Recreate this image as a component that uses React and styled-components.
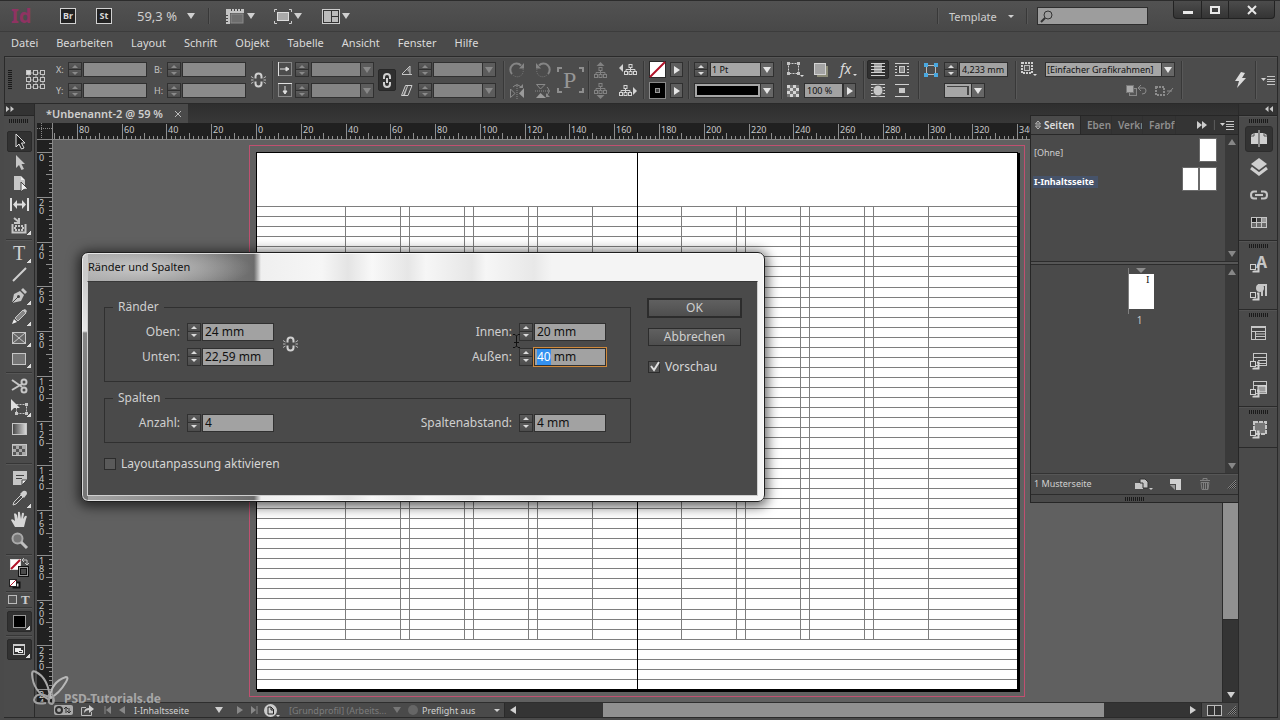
import { useEffect, useRef, useState } from "react";
import styled, { createGlobalStyle, css } from "styled-components";

const MM = 2.239;
const ORIGIN_X = 203;
const ORIGIN_Y = 12;

const GlobalStyle = createGlobalStyle`
  * { box-sizing: border-box; }
  body {
    margin: 0;
    background: #4a4a4a;
    color: #cfcfcf;
    font-family: "Noto Sans", "Open Sans", sans-serif;
    font-size: 12px;
    line-height: 16px;
  }
  button, input, select { font-family: inherit; font-size: inherit; color: inherit; }
  button { background: none; border: 0; padding: 0; }
  ::selection { background: #3390ef; color: #fff; }
`;

/* ---------- small shared parts ---------- */

const Glyph = styled.svg`
  display: block;
  flex: none;
  overflow: visible;
`;

function Icon({ w, h = w, children }) {
  return (
    <Glyph width={w} height={h} viewBox={`0 0 ${w} ${h}`} fill="none" stroke="none" aria-hidden="true">
      {children}
    </Glyph>
  );
}

const triangles = {
  down: [8, 6, "M0 0H8L4 6Z"],
  up: [8, 6, "M0 6H8L4 0Z"],
  right: [6, 8, "M0 0V8L6 4Z"],
  left: [6, 8, "M6 0V8L0 4Z"],
  smallDown: [6, 3, "M0 0H6L3 3Z"],
  spinUp: [6, 3, "M0 3H6L3 0Z"],
};

function Tri({ dir, color = "#d0d0d0" }) {
  const [w, h, d] = triangles[dir];
  return (
    <Icon w={w} h={h}>
      <path d={d} fill={color} />
    </Icon>
  );
}

const SpinBox = styled.span`
  display: flex;
  flex-direction: column;
  flex: none;
  width: 14px;
  height: ${(p) => (p.$tall ? 18 : 15)}px;
  border: 1px solid #303030;
`;

const SpinButton = styled.button`
  flex: 1;
  display: flex;
  align-items: center;
  justify-content: center;
  background: linear-gradient(#5c5c5c, #4c4c4c);
  & + & { border-top: 1px solid #303030; }
`;

function Spinner({ name, tall, dim }) {
  const color = dim ? "#8a8a8a" : "#dcdcdc";
  return (
    <SpinBox $tall={tall}>
      <SpinButton type="button" aria-label={`${name} erhöhen`}>
        <Tri dir="spinUp" color={color} />
      </SpinButton>
      <SpinButton type="button" aria-label={`${name} verringern`}>
        <Tri dir="smallDown" color={color} />
      </SpinButton>
    </SpinBox>
  );
}

const Grip = styled.span`
  display: block;
  flex: none;
  width: 20px;
  height: 4px;
  background: repeating-linear-gradient(90deg, #1a1a1a 0 1px, #4a4a4a 1px 2px);
`;

const GripTall = styled(Grip)`
  width: 4px;
  height: 20px;
  background: repeating-linear-gradient(#1a1a1a 0 1px, #4a4a4a 1px 2px);
`;

const VLine = styled.span`
  flex: none;
  align-self: stretch;
  width: 1px;
  margin: ${(p) => p.$inset || 4}px 0;
  background: #383838;
  box-shadow: 1px 0 0 #585858;
`;

/* ---------- application bar and menu ---------- */

const Window = styled.div`
  position: relative;
  display: flex;
  flex-direction: column;
  min-height: 100vh;
  min-width: 1180px;
  overflow: hidden;
  background: #4a4a4a;
`;

const AppBar = styled.header`
  display: flex;
  align-items: center;
  height: 32px;
  padding-left: 11px;
  background: linear-gradient(#525252, #484848);
  border-top: 1px solid #2c2c2c;
  border-bottom: 1px solid #3c3c3c;
`;

const Logo = styled.span`
  width: 49px;
  color: #8f3362;
  font-size: 20px;
  line-height: 20px;
  font-weight: 700;
`;

const AppBadge = styled.button`
  width: 16px;
  height: 16px;
  margin-right: 20px;
  border: 1px solid #d2d2d2;
  background: #222;
  color: #d8d8d8;
  font-size: 9px;
  line-height: 12px;
  font-weight: 700;
`;

const ZoomButton = styled.button`
  display: flex;
  align-items: center;
  justify-content: space-between;
  width: 58px;
  margin: 0 13px 0 5px;
  font-size: 13px;
`;

const ViewButton = styled.button`
  display: flex;
  align-items: center;
  gap: 2px;
  margin-left: 17px;
  width: 31px;
`;

const AppBarRight = styled.div`
  display: flex;
  align-items: center;
  align-self: stretch;
  margin-left: auto;
`;

const TemplateButton = styled.button`
  display: flex;
  align-items: center;
  justify-content: space-between;
  width: 65px;
  margin: 0 12px 0 11px;
  font-size: 11px;
`;

const SearchBox = styled.label`
  display: flex;
  align-items: center;
  width: 111px;
  height: 18px;
  margin: 0 25px 0 10px;
  padding-left: 2px;
  background: #9d9d9d;
  border: 1px solid #2e2e2e;
  input { width: 80px; border: 0; background: none; outline: 0; }
`;

const WindowButtons = styled.div`
  display: flex;
  align-self: flex-start;
  height: 18px;
  margin-right: 5px;
  border: 1px solid #222;
  border-top: 0;
  border-radius: 0 0 4px 4px;
  background: linear-gradient(#4c4c4c, #343434);
`;

const WindowButton = styled.button`
  display: flex;
  align-items: center;
  justify-content: center;
  width: ${(p) => (p.$wide ? 46 : 27)}px;
  & + & { border-left: 1px solid #222; }
`;

const MenuBar = styled.nav`
  display: flex;
  align-items: center;
  gap: 18px;
  height: 24px;
  padding: 0 0 2px 11px;
  font-size: 11px;
  a { color: #dadada; text-decoration: none; }
`;

/* ---------- control bar ---------- */

const ControlBar = styled.div`
  display: flex;
  align-items: center;
  height: 48px;
  margin: 0 2px 0 4px;
  background: #4c4c4c;
  border: 1px solid #2a2a2a;
  box-shadow: inset 0 1px 0 #575757;
  font-size: 9px;
  line-height: 12px;
`;

const Group = styled.div`
  display: grid;
  flex: none;
  grid-template-columns: ${(p) => p.$cols};
  grid-template-rows: 21px 21px;
  align-items: center;
  justify-items: start;
  padding-left: ${(p) => p.$pad || 5}px;
  label { color: #c4c4c4; }
`;

const Both = styled.span`
  grid-row: span 2;
`;

const Wide = styled.span`
  grid-column: span ${(p) => p.$n};
  display: flex;
`;

const BarInput = styled.input`
  width: ${(p) => p.$w}px;
  height: 15px;
  padding: 0 2px;
  border: 1px solid #303030;
  border-radius: 0;
  outline: 0;
  background: ${(p) => (p.$lit ? "#a2a2a2" : "#8b8b8b")};
  color: #111;
  font-size: 9px;
`;

const ComboBox = styled.span`
  position: relative;
  display: block;
  width: ${(p) => p.$w}px;
  height: 15px;
  select {
    display: block;
    width: 100%;
    height: 15px;
    padding: 0 14px 0 1px;
    appearance: none;
    border: 1px solid #303030;
    border-radius: 0;
    outline: 0;
    background: ${(p) => (p.$lit ? "#a6a6a6" : "#848484")};
    color: #111;
    font-size: 9px;
    opacity: 1;
  }
`;

const ComboArrow = styled.span`
  position: absolute;
  top: 0;
  right: 0;
  display: flex;
  align-items: center;
  justify-content: center;
  width: 14px;
  height: 15px;
  border: 1px solid #303030;
  background: ${(p) => (p.$lit ? "#666" : "#5c5c5c")};
  pointer-events: none;
`;

const ComboPreview = styled.span`
  position: absolute;
  top: 3px;
  left: 3px;
  right: 16px;
  height: 9px;
  background: ${(p) => (p.$line ? "none" : "#000")};
  ${(p) =>
    p.$line &&
    css`
      border: solid #444;
      border-width: 1px 2px 0 0;
    `}
  pointer-events: none;
`;

function Combo({ w, name, value = "", lit, preview }) {
  return (
    <ComboBox $w={w} $lit={lit}>
      <select aria-label={name} disabled={!lit} defaultValue={value}>
        <option value={value}>{value}</option>
      </select>
      {preview && <ComboPreview $line={preview === "line"} />}
      <ComboArrow $lit={lit}>
        <Tri dir="down" color={lit ? "#e6e6e6" : "#888"} />
      </ComboArrow>
    </ComboBox>
  );
}

const ArrowButton = styled.button`
  display: flex;
  align-items: center;
  justify-content: center;
  width: 13px;
  height: 15px;
  border: 1px solid #303030;
  background: #5e5e5e;
`;

const IconButton = styled.button`
  display: flex;
  align-items: center;
  justify-content: center;
  ${(p) =>
    p.$pressed &&
    css`
      width: ${p.$w}px;
      height: ${p.$h}px;
      background: #303030;
      border: 1px solid #282828;
      border-radius: 2px;
    `}
`;

const BarSpring = styled.span`
  flex: 1;
`;

const WrapInset = styled.span`
  padding-left: 4px;
`;

function BrokenLink() {
  return (
    <Icon w={15} h={16}>
      <path d="M4.5 6.500V4.500Q4.500 1.500 7.500 1.500T10.500 4.500V6.500M4.500 9.500V11.500Q4.500 14.500 7.500 14.500T10.500 11.500V9.500" stroke="#d0d0d0" strokeWidth="2" />
      <path d="M0 4.500L2.500 6M0 8H2.500M0 11.500L2.500 10M15 4.500L12.500 6M15 8H12.500M15 11.500L12.500 10" stroke="#b8b8b8" />
    </Icon>
  );
}

function ReferencePoint() {
  const spots = [0, 7, 14];
  return (
    <Icon w={20} h={20}>
      <path d="M3 3H17V17H3ZM3 10H17M10 3V17" stroke="#a8a8a8" />
      {spots.map((x) =>
        spots.map((y) => (
          <rect key={`${x}-${y}`} x={x + 0.5} y={y + 0.5} width="4" height="4" fill={x + y === 0 ? "#d8d8d8" : "#4a4a4a"} stroke="#c4c4c4" />
        ))
      )}
    </Icon>
  );
}

function BoxArrow({ down }) {
  return (
    <Icon w={15} h={15}>
      <rect x="0.500" y="0.500" width="13" height="13" stroke="#c4c4c4" strokeDasharray="1 1" />
      <path d={down ? "M0 0.500H14" : "M0.500 0V14"} stroke="#e0e0e0" />
      <path d={down ? "M7 3V10M5 8L7 11L9 8Z" : "M2 7H10M8 5L11 7L8 9Z"} stroke="#e0e0e0" fill="#e0e0e0" />
    </Icon>
  );
}

function Tree({ dir, dim }) {
  const c = dim ? "#828282" : "#d4d4d4";
  const sideways = dir === "left" || dir === "right";
  const shift = dir === "left" ? 5 : 0;
  return (
    <Icon w={sideways ? 18 : 13} h={sideways ? 11 : 16}>
      <g transform={`translate(${shift} ${dir === "up" ? 5 : 0})`}>
        <path d="M6.500 3V8M2 8V5.500H11V8" stroke={c} />
        <rect x="5" y="0.500" width="3" height="3" stroke={c} />
        <rect x="0.500" y="7.500" width="3" height="3" stroke={c} />
        <rect x="5" y="7.500" width="3" height="3" stroke={c} />
        <rect x="9.500" y="7.500" width="3" height="3" stroke={c} />
      </g>
      {dir === "up" && <path d="M2.500 4L6.500 0L10.500 4Z" fill={c} />}
      {dir === "down" && <path d="M2.500 12L6.500 16L10.500 12Z" fill={c} />}
      {dir === "left" && <path d="M4 0V8L0 4Z" fill={c} />}
      {dir === "right" && <path d="M14 2V10L18 6Z" fill={c} />}
    </Icon>
  );
}

function RotateIcon({ back }) {
  return (
    <Icon w={16}>
      <g transform={back ? "translate(16 0) scale(-1 1)" : undefined}>
        <path d="M3 12A6 6 0 0 1 12 3.500" stroke="#858585" strokeWidth="2" />
        <path d="M14 7A6 6 0 0 1 4 13" stroke="#787878" strokeDasharray="1 1" />
        <path d="M10 6.500H15V1Z" fill="#858585" />
      </g>
    </Icon>
  );
}

function FlipIcon({ vertical }) {
  return (
    <Icon w={16}>
      <g transform={vertical ? "rotate(90 8 8)" : undefined}>
        <path d="M8 1V16" stroke="#8a8a8a" strokeDasharray="1 1" />
        <path d="M1.500 6V14.500L6 10.500Z" stroke="#8a8a8a" />
        <path d="M15 5V15L10 10.500Z" fill="#9a9a9a" />
        <path d="M4 4Q8 0 12 4" stroke="#8a8a8a" />
        <path d="M10 5H14V1Z" fill="#8a8a8a" />
      </g>
    </Icon>
  );
}

function WrapIcon({ kind }) {
  return (
    <Icon w={14} h={13}>
      {[0, 3, 6, 9, 12].map((y) => (
        <path key={y} d={`M0 ${y + 0.5}H14`} stroke="#cfcfcf" />
      ))}
      {kind === "none" && <path d="M3 1.500H11M3 2.500H11M3 4.500H11M3 5.500H11M3 7.500H11M3 8.500H11" stroke="#9c9c9c" />}
      {kind === "box" && <rect x="2.500" y="2.500" width="9" height="8" fill="#3a3a3a" stroke="#4a4a4a" />}
      {kind === "box" && <rect x="4.500" y="3.500" width="5" height="6" fill="#888" stroke="#ccc" />}
      {kind === "shape" && <ellipse cx="7" cy="6.500" rx="5" ry="5.500" fill="#c6c6c6" stroke="#4a4a4a" />}
      {kind === "jump" && <path d="M0 3H14V10H0Z" fill="#4c4c4c" />}
      {kind === "jump" && <path d="M4 4H10V9H4Z" fill="#c8c8c8" />}
    </Icon>
  );
}

function MenuIcon() {
  return (
    <Icon w={14} h={9}>
      <path d="M0 2H5L2.500 5Z" fill="#d0d0d0" />
      <path d="M6 0.500H14M6 3.500H14M6 5.500H14M6 8.500H14" stroke="#c4c4c4" />
    </Icon>
  );
}

function Controls() {
  return (
    <ControlBar>
      <Group $pad={3} $cols="18px 30px 12px 15px 71px 13px 15px 69px 21px">
        <Both><GripTall /></Both>
        <Both><ReferencePoint /></Both>
        <label htmlFor="pos-x">X:</label>
        <Spinner name="X" dim />
        <BarInput id="pos-x" $w={64} />
        <label htmlFor="width">B:</label>
        <Spinner name="B" dim />
        <BarInput id="width" $w={64} />
        <Both><BrokenLink /></Both>
        <label htmlFor="pos-y">Y:</label>
        <Spinner name="Y" dim />
        <BarInput id="pos-y" $w={64} />
        <label htmlFor="height">H:</label>
        <Spinner name="H" dim />
        <BarInput id="height" $w={64} />
      </Group>
      <VLine />
      <Group $cols="17px 16px 67px 23px 17px 15px 70px">
        <BoxArrow />
        <Spinner name="X-Skalierung" dim />
        <Combo w={63} name="X-Skalierung" />
        <Both>
          <IconButton type="button" $pressed $w={18} $h={22} aria-label="Proportionen beibehalten">
            <Icon w={10} h={15}>
              <path d="M2 6V4Q2 1 5 1T8 4V6M2 9V11Q2 14 5 14T8 11V9M5 5V10" stroke="#d0d0d0" strokeWidth="2" />
            </Icon>
          </IconButton>
        </Both>
        <Icon w={12} h={10}><path d="M1 9.500H11M1 9L9 1V9" stroke="#c4c4c4" /><path d="M6 5L9 2V8Z" fill="#999" /></Icon>
        <Spinner name="Drehwinkel" dim />
        <Combo w={63} name="Drehwinkel" />
        <BoxArrow down />
        <Spinner name="Y-Skalierung" dim />
        <Combo w={63} name="Y-Skalierung" />
        <Icon w={12} h={11}><path d="M4.500 0.500H11L7 10.500H0.500Z" stroke="#d0d0d0" /><path d="M6 1H7L4 10H2Z" fill="#bbb" /></Icon>
        <Spinner name="Scherwinkel" dim />
        <Combo w={63} name="Scherwinkel" />
      </Group>
      <VLine />
      <Group $cols="26px 22px 31px">
        <RotateIcon />
        <RotateIcon back />
        <Both>
          <Icon w={27} h={26}>
            <path d="M1 5V1H5M22 1H26V5M26 21V25H22M5 25H1V21" stroke="#8e8e8e" strokeWidth="2" />
            <text x="6" y="21" fill="#969696" fontSize="24" fontFamily="Liberation Serif, serif">P</text>
          </Icon>
        </Both>
        <FlipIcon />
        <FlipIcon vertical />
      </Group>
      <VLine />
      <Group $cols="25px 24px">
        <Tree dir="up" dim />
        <Tree dir="left" />
        <Tree dir="down" dim />
        <Tree dir="right" />
      </Group>
      <VLine />
      <Group $cols="21px 18px">
        <Icon w={17}><rect x="0.500" y="0.500" width="16" height="16" fill="#fff" stroke="#2a2a2a" /><path d="M1 16L16 1" stroke="#b01228" strokeWidth="2" /></Icon>
        <ArrowButton type="button" aria-label="Flächenfarbe"><Tri dir="right" color="#e6e6e6" /></ArrowButton>
        <Icon w={17}><rect x="0.500" y="0.500" width="16" height="16" fill="#000" stroke="#8a8a8a" /><rect x="6.500" y="6.500" width="4" height="4" fill="#444" stroke="#999" /></Icon>
        <ArrowButton type="button" aria-label="Konturfarbe"><Tri dir="right" color="#e6e6e6" /></ArrowButton>
      </Group>
      <VLine />
      <Group $cols="16px 71px">
        <Spinner name="Konturstärke" />
        <Combo w={64} name="Konturstärke" value="1 Pt" lit />
        <Wide $n={2}><Combo w={80} name="Konturtyp" lit preview="fill" /></Wide>
      </Group>
      <VLine />
      <Group $cols="17px 10px 26px 23px">
        <Wide $n={2}>
          <Icon w={16} h={15}><rect x="1.500" y="1.500" width="10" height="10" stroke="#d0d0d0" strokeDasharray="2 1" /><path d="M0 0H3V3H0ZM10 0H13V3H10ZM0 10H3V13H0ZM10 10H13V13H10Z" fill="#c4c4c4" /><path d="M13 13H17L15 15Z" fill="#ddd" /></Icon>
        </Wide>
        <Icon w={14}><rect x="3" y="3" width="11" height="11" fill="#8c8c78" /><rect x="0.500" y="0.500" width="11" height="11" fill="#a4a4a4" stroke="#d4d4d4" /></Icon>
        <Icon w={17} h={15}><text x="0" y="12" fill="#dcdcdc" fontSize="14" fontStyle="italic" fontFamily="Noto Sans, sans-serif">fx</text><path d="M13 12H17L15 14Z" fill="#ddd" /></Icon>
        <Icon w={12}>
          <rect width="12" height="12" fill="#d4d4d4" />
          <path d="M3 0H6V3H3ZM9 0H12V3H9ZM0 3H3V6H0ZM6 3H9V6H6ZM3 6H6V9H3ZM9 6H12V9H9ZM0 9H3V12H0ZM6 9H9V12H6Z" fill="#767676" />
        </Icon>
        <Wide $n={3}>
          <BarInput aria-label="Deckkraft" $w={39} $lit defaultValue="100 %" />
          <ArrowButton type="button" aria-label="Deckkraftregler"><Tri dir="right" color="#e6e6e6" /></ArrowButton>
        </Wide>
      </Group>
      <VLine />
      <Group $pad={3} $cols="28px 23px">
        <IconButton type="button" $pressed $w={22} $h={19} aria-label="Kein Textumfluss"><WrapIcon kind="none" /></IconButton>
        <IconButton type="button" aria-label="Begrenzungsrahmen"><WrapIcon kind="box" /></IconButton>
        <WrapInset><WrapIcon kind="shape" /></WrapInset>
        <WrapIcon kind="jump" />
      </Group>
      <VLine />
      <Group $cols="20px 15px 56px">
        <Icon w={14}><rect x="2.500" y="2.500" width="9" height="9" stroke="#b8b8b8" /><path d="M0 0H4V4H0ZM10 0H14V4H10ZM0 10H4V14H0ZM10 10H14V14H10Z" fill="#4aa8e0" /></Icon>
        <Spinner name="Eckengröße" />
        <BarInput aria-label="Eckengröße" $w={49} $lit defaultValue="4,233 mm" />
        <span />
        <Wide $n={2}><Combo w={41} name="Eckenform" lit preview="line" /></Wide>
      </Group>
      <VLine />
      <Group $cols="24px 81px 29px 26px">
        <Icon w={16} h={15}><rect x="1" y="1" width="10" height="10" stroke="#d0d0d0" strokeWidth="2" strokeDasharray="2 1" /><rect x="3.500" y="3.500" width="5" height="5" fill="#555" stroke="#bbb" /><path d="M12 12H16L14 14Z" fill="#ddd" /></Icon>
        <Wide $n={3}><Combo w={130} name="Objektformat" value="[Einfacher Grafikrahmen]" lit /></Wide>
        <Wide $n={2} />
        <Icon w={21} h={11}><rect x="3.500" y="3.500" width="7" height="7" fill="#555" stroke="#888" /><rect x="0.500" y="0.500" width="7" height="7" fill="#aaa" stroke="#777" /><path d="M13 3H18Q20 3 20 6T16 9M15 0L12 3L15 6" stroke="#8c8c8c" /></Icon>
        <Icon w={18} h={10}><rect x="1" y="1" width="8" height="8" stroke="#8c8c8c" strokeWidth="2" strokeDasharray="2 1" /><path d="M12 9L18 2M12 5H17" stroke="#8c8c8c" /></Icon>
      </Group>
      <VLine />
      <BarSpring />
      <Group $cols="20px">
        <Both><Icon w={11} h={16}><path d="M6 0L0 9H4L2 16L11 6H7L10 1Z" fill="#dcdcdc" /></Icon></Both>
      </Group>
      <VLine />
      <Group $cols="16px">
        <Both>
          <IconButton type="button" aria-label="Bedienfeldmenü"><MenuIcon /></IconButton>
        </Both>
      </Group>
    </ControlBar>
  );
}

/* ---------- toolbox ---------- */

const Workspace = styled.main`
  display: flex;
  flex: 1;
  margin: 0 2px 2px 4px;
  border-bottom: 1px solid #2a2a2a;
`;

const Toolbox = styled.aside`
  flex: none;
  display: flex;
  flex-direction: column;
  align-items: center;
  width: 31px;
  background: #4b4b4b;
  border-right: 1px solid #2a2a2a;
`;

const DockHead = styled.div`
  align-self: stretch;
  display: flex;
  align-items: center;
  justify-content: ${(p) => (p.$end ? "flex-end" : "flex-start")};
  height: 12px;
  padding: 0 ${(p) => (p.$end ? 4 : 2)}px 1px;
  background: #333;
  border-bottom: 1px solid #262626;
`;

const ToolGrip = styled(Grip)`
  margin: 3px 0 8px;
`;

const ToolButton = styled.button`
  position: relative;
  display: flex;
  align-items: center;
  justify-content: center;
  width: 25px;
  height: 21px;
  border-radius: 2px;
  ${(p) => p.$pressed && "background: #323232; border: 1px solid #2a2a2a;"}
`;

const Flyout = styled.span`
  position: absolute;
  right: 1px;
  bottom: 1px;
  width: 4px;
  height: 4px;
  background: linear-gradient(135deg, transparent 50%, #ddd 50%);
`;

const ToolRule = styled.hr`
  align-self: stretch;
  height: 1px;
  margin: 3px 2px;
  border: 0;
  background: #363636;
  box-shadow: 0 1px 0 #565656;
`;

const ModeRow = styled.div`
  display: flex;
  gap: 3px;
`;

const C = "#c6c6c6";

const toolIcons = {
  Auswahl: <path d="M5 1V14L8 11L10.500 16L13 15L10.500 10H14Z" fill="#222" stroke="#e0e0e0" />,
  Direktauswahl: <path d="M5 1V14L8 11L10.500 16L13 15L10.500 10H14Z" fill={C} />,
  Seite: <><path d="M3 1H10V5H14V15H3Z" fill={C} /><path d="M10 1L14 5H10Z" fill="#eee" /><path d="M10 7V17L12.500 14.500L17 14Z" fill="#eee" stroke="#444" /></>,
  Lücke: <><path d="M0 2V15M17 2V15" stroke="#ddd" strokeWidth="2" /><path d="M4 8.500H13" stroke="#ddd" strokeWidth="2" /><path d="M6 4V13L2 8.500ZM11 4V13L15 8.500Z" fill="#ddd" /></>,
  Inhaltsaufnahme: <><path d="M1.500 7V15.500H14.500V7" stroke={C} strokeWidth="2" /><path d="M4 9H12V13H4Z" stroke={C} strokeWidth="2" strokeDasharray="2 1" /><path d="M3 1L8 5M8 1V6H3" stroke={C} strokeWidth="2" /></>,
  Text: <text x="2" y="15" fill="#d0d0d0" fontSize="20" fontFamily="Liberation Serif, serif">T</text>,
  Linie: <path d="M2 15L15 2" stroke="#d0d0d0" strokeWidth="2" />,
  Zeichenstift: <><path d="M1 16L3 7L9 4L13 8L10 14Z" fill={C} /><path d="M10 3L12 1L16 5L14 7Z" fill={C} /><path d="M1 16L7 10" stroke="#444" /><circle cx="7.500" cy="9.500" r="1.500" fill="#444" /></>,
  Buntstift: <><path d="M1 16L3 11L6 14Z" fill="#eee" /><path d="M4 10L12 2L15 5L7 13Z" fill="#858585" stroke={C} /><path d="M12 2L14 1L16 3L15 5Z" fill={C} /></>,
  Rechteckrahmen: <><rect x="1.500" y="3.500" width="13" height="11" fill="#666" stroke={C} /><path d="M2 4L14 14M14 4L2 14" stroke={C} /></>,
  Rechteck: <rect x="1.500" y="3.500" width="13" height="11" fill="#757575" stroke={C} />,
  Schere: <><path d="M1 2L11 9M1 12L11 6" stroke={C} strokeWidth="2" /><circle cx="13" cy="4" r="2.500" stroke={C} strokeWidth="2" /><circle cx="13" cy="12" r="2.500" stroke={C} strokeWidth="2" /></>,
  Transformieren: <><rect x="5.500" y="5.500" width="10" height="9" stroke={C} strokeDasharray="2 1" /><path d="M4 13H7V16H4ZM14 13H17V16H14ZM14 4H17V7H14Z" fill={C} /><path d="M0 0V12L3 9L9 9Z" fill="#ddd" /></>,
  Verlauf: <><defs><linearGradient id="fade"><stop stopColor="#444" /><stop offset="1" stopColor="#ddd" /></linearGradient></defs><rect x="1.500" y="3.500" width="14" height="11" fill="url(#fade)" stroke={C} /></>,
  "Weiche Verlaufskante": <><rect x="1.500" y="3.500" width="14" height="11" fill="#a8a8a8" stroke={C} /><path d="M2 5H5V8H2ZM8 5H11V8H8ZM5 8H8V11H5ZM11 8H14V11H11ZM2 11H5V14H2ZM8 11H11V14H8Z" fill="#565656" /></>,
  Notiz: <><path d="M2 2H16V11L11 16H2Z" fill={C} /><path d="M5 6.500H13M5 9.500H11" stroke="#444" /><path d="M11 11H16L11 16Z" fill="#eee" stroke="#444" /></>,
  Pipette: <><path d="M2 15L3 12L10 5L12 7L5 14Z" stroke="#d0d0d0" /><path d="M9 4L12 1Q16 0 16 4L13 8Z" fill="#d0d0d0" /></>,
  Hand: <path d="M4 16L0 9Q1 7 4 10L3 3Q4 1 6 4L7 8V1Q9 0 9 2L10 8L11 2Q13 1 13 3L12 8L14 5Q17 4 15 8L13 16Z" fill="#d6d6d6" />,
  Zoom: <><circle cx="6.500" cy="6.500" r="5" fill="#777" stroke="#aaa" strokeWidth="2" /><path d="M10 10L16 16" stroke="#c0c0c0" strokeWidth="3" /></>,
};

const flyouts = ["Inhaltsaufnahme", "Text", "Zeichenstift", "Buntstift", "Rechteckrahmen", "Rechteck", "Transformieren", "Pipette"];

const toolGroups = [
  ["Auswahl", "Direktauswahl", "Seite", "Lücke", "Inhaltsaufnahme"],
  ["Text", "Linie", "Zeichenstift", "Buntstift", "Rechteckrahmen", "Rechteck"],
  ["Schere", "Transformieren", "Verlauf", "Weiche Verlaufskante"],
  ["Notiz", "Pipette", "Hand", "Zoom"],
];

const ToolGroup = styled.div`
  align-self: stretch;
  display: flex;
  flex-direction: column;
  align-items: center;
`;

function DoubleArrow({ left, color = "#c8c8c8" }) {
  return (
    <Icon w={8} h={6}>
      <path d={left ? "M3.500 0V6L0 3ZM8 0V6L4.500 3Z" : "M0 0V6L3.500 3ZM4.500 0V6L8 3Z"} fill={color} />
    </Icon>
  );
}

function Tools() {
  return (
    <Toolbox>
      <DockHead><DoubleArrow /></DockHead>
      <ToolGrip />
      {toolGroups.map((group) => (
        <ToolGroup key={group[0]}>
          {group.map((name) => (
            <ToolButton key={name} type="button" aria-label={name} $pressed={name === "Auswahl"}>
              <Icon w={17}>{toolIcons[name]}</Icon>
              {flyouts.includes(name) && <Flyout />}
            </ToolButton>
          ))}
          <ToolRule />
        </ToolGroup>
      ))}
      <Icon w={21} h={30}>
        <rect x="1.500" y="1.500" width="10" height="10" fill="#fff" stroke="#ddd" />
        <path d="M2 11L11 2" stroke="#b01228" strokeWidth="2" />
        <rect x="10.500" y="9.500" width="8" height="8" fill="#4a4a4a" stroke="#111" strokeWidth="3" />
        <rect x="10.500" y="9.500" width="8" height="8" stroke="#999" />
        <path d="M14 2H18V6M15 0L13 2L15 4M16 5L18 7L20 5" stroke={C} />
        <rect x="4.500" y="24.500" width="6" height="5" fill="#ccc" stroke="#111" strokeWidth="2" />
        <rect x="0.500" y="21.500" width="7" height="7" fill="#fff" stroke="#222" />
        <path d="M1 28L7 22" stroke="#b01228" />
      </Icon>
      <ToolRule />
      <ModeRow>
        <Icon w={11} h={9}><rect x="1.500" y="0.500" width="8" height="8" fill="#555" stroke="#bbb" /></Icon>
        <Icon w={10} h={9}><text x="0" y="9" fill="#ccc" fontSize="13" fontWeight="700" fontFamily="Liberation Serif, serif">T</text></Icon>
      </ModeRow>
      <ToolRule />
      <ToolButton type="button" aria-label="Farbe anwenden" $pressed>
        <Icon w={13}><rect x="0.500" y="0.500" width="12" height="12" fill="#000" stroke="#999" /></Icon>
        <Flyout />
      </ToolButton>
      <ToolRule />
      <ToolButton type="button" aria-label="Bildschirmmodus" $pressed>
        <Icon w={12} h={11}><rect x="0.500" y="0.500" width="11" height="10" stroke="#ccc" /><path d="M0 1.500H12" stroke="#ccc" /><rect x="2.500" y="4.500" width="5" height="3" fill="#eee" stroke="#eee" /><rect x="5.500" y="6.500" width="4" height="2" fill="#333" stroke="#eee" /></Icon>
        <Flyout />
      </ToolButton>
    </Toolbox>
  );
}

/* ---------- document area ---------- */

const Document = styled.section`
  flex: 1;
  min-width: 0;
  display: flex;
  flex-direction: column;
  margin-left: 2px;
  border-right: 1px solid #2a2a2a;
`;

const TabBar = styled.div`
  display: flex;
  height: 19px;
  background: linear-gradient(#2e2e2e, #383838);
`;

const DocTab = styled.div`
  display: flex;
  align-items: center;
  justify-content: space-between;
  width: 151px;
  padding: 0 7px 0 9px;
  background: #4a4a4a;
  font-size: 11px;
  font-weight: 600;
`;

const CanvasGrid = styled.div`
  flex: 1;
  display: grid;
  grid-template-columns: 16px 1fr 16px;
  grid-template-rows: 17px 1fr;
`;

const Corner = styled.div`
  background: #202020;
  border-right: 1px solid #8a8a8a;
  border-bottom: 1px solid #8a8a8a;
`;

const RulerTop = styled.div`
  position: relative;
  grid-column: 2 / span 2;
  overflow: hidden;
  background: #202020;
  border-bottom: 1px solid #8a8a8a;
`;

const RulerSide = styled.div`
  position: relative;
  overflow: hidden;
  background: #202020;
  border-right: 1px solid #8a8a8a;
`;

const Canvas = styled.div`
  position: relative;
  overflow: hidden;
  background: #606060;
`;

const Artwork = styled.svg`
  position: absolute;
  top: 0;
  left: 0;
  shape-rendering: crispEdges;
`;

const VScroll = styled.div`
  display: flex;
  flex-direction: column;
  align-items: center;
  justify-content: space-between;
  padding-bottom: 4px;
  background: #343434;
  border-left: 1px solid #2a2a2a;
`;

const VThumb = styled.div`
  width: 100%;
  height: 86%;
  background: #909090;
  border-bottom: 1px solid #2a2a2a;
`;

function tickLength(mm) {
  if (mm % 20 === 0) return 15;
  if (mm % 10 === 0) return 6;
  return 3;
}

function scale(from, to) {
  const marks = [];
  for (let mm = from; mm <= to; mm += 2) marks.push(mm);
  return marks;
}

function HorizontalRuler() {
  const marks = scale(-90, 350);
  return (
    <RulerTop>
      <Artwork width="1400" height="16" aria-hidden="true">
        {marks.map((mm) => (
          <rect key={mm} x={Math.round(ORIGIN_X + mm * MM)} y={16 - tickLength(mm)} width="1" height={tickLength(mm)} fill="#8e8e8e" />
        ))}
        {marks
          .filter((mm) => mm % 20 === 0)
          .map((mm) => (
            <text key={mm} x={Math.round(ORIGIN_X + mm * MM) + 2} y="10" fill="#c8c8c8" fontSize="9">
              {Math.abs(mm)}
            </text>
          ))}
      </Artwork>
    </RulerTop>
  );
}

function VerticalRuler() {
  const marks = scale(-4, 244);
  return (
    <RulerSide>
      <Artwork width="15" height="562" aria-hidden="true">
        {marks.map((mm) => (
          <rect key={mm} x={15 - tickLength(mm)} y={Math.round(ORIGIN_Y + mm * MM)} width={tickLength(mm)} height="1" fill="#8e8e8e" />
        ))}
        {marks
          .filter((mm) => mm % 20 === 0)
          .map((mm) =>
            String(mm)
              .split("")
              .map((digit, i) => (
                <text key={`${mm}-${i}`} x="2" y={Math.round(ORIGIN_Y + mm * MM) + 9 + i * 8} fill="#c8c8c8" fontSize="9">
                  {digit}
                </text>
              ))
          )}
      </Artwork>
    </RulerSide>
  );
}

const baselines = Array.from({ length: 48 }, (_, i) => Math.round(66 + i * 10.064));
const columnsLeft = [292, 347, 356, 411, 420, 475, 484, 539];
const columnGuides = [...columnsLeft, ...columnsLeft.map((x) => x + 336)];

function Spread() {
  return (
    <Artwork width="1180" height="562" role="img" aria-label="Doppelseite mit Grundlinienraster">
      <rect x="196.500" y="5.500" width="775" height="551" stroke="#c05070" fill="none" />
      <rect x="204" y="13" width="763" height="539" fill="#000" />
      <rect x="203" y="12" width="762" height="538" fill="#000" />
      <rect x="204" y="13" width="760" height="536" fill="#fff" />
      {baselines.map((y) => (
        <rect key={y} x="204" y={y} width="760" height="1" fill="#7e7e7e" />
      ))}
      {columnGuides.map((x) => (
        <rect key={x} x={x} y="66" width="1" height="433" fill="#7e7e7e" />
      ))}
      <rect x="584" y="12" width="1" height="538" fill="#000" />
    </Artwork>
  );
}

/* ---------- status bar ---------- */

const StatusBar = styled.footer`
  display: flex;
  align-items: center;
  height: 15px;
  margin-left: 16px;
  background: #4a4a4a;
  border-top: 1px solid #2e2e2e;
  font-size: 9px;
  line-height: 12px;
`;

const Cell = styled.button`
  flex: none;
  display: flex;
  align-items: center;
  justify-content: ${(p) => (p.$spread ? "space-between" : "flex-start")};
  width: ${(p) => p.$w}px;
  padding-right: ${(p) => p.$pad || 0}px;
  color: ${(p) => (p.$dim ? "#7c7c7c" : "#d0d0d0")};
`;

const PreflightState = styled.span`
  display: flex;
  align-items: center;
  gap: 4px;
`;

const HScroll = styled.div`
  flex: 1;
  display: flex;
  align-items: center;
  align-self: stretch;
  padding: 0 5px;
  background: #343434;
  border-left: 1px solid #2a2a2a;
  border-right: 1px solid #2a2a2a;
`;

const HThumb = styled.div`
  width: 73%;
  height: 14px;
  margin-left: auto;
  margin-right: 86px;
  background: #909090;
`;

const SizeGrip = styled.span`
  flex: none;
  width: 9px;
  height: 9px;
  margin: 0 2px 0 5px;
  background: repeating-conic-gradient(#2a2a2a 0 25%, #888 0 50%) 0 0 / 2px 2px;
  clip-path: polygon(100% 0, 100% 100%, 0 100%);
`;

function Status() {
  return (
    <StatusBar>
      <Cell type="button" $w={28} aria-label="Live-Preflight">
        <Icon w={20} h={10}><rect x="1" width="19" height="10" rx="2" fill="#aaa" /><circle cx="6" cy="5" r="3" stroke="#333" strokeWidth="2" /><path d="M11 4L13 2L15 4M13 2V8M14 6L16 8L18 6M16 8V3" stroke="#333" /></Icon>
      </Cell>
      <Cell type="button" $w={23} aria-label="Freigeben">
        <Icon w={13} h={11}><path d="M5 2.500H0.500V10.500H10.500V7" stroke="#bbb" /><path d="M3 8Q3 3 8 3V0L13 4L8 8V5Q5 5 3 8Z" fill="#ccc" /></Icon>
      </Cell>
      <Cell type="button" $w={15} aria-label="Erste Seite">
        <Icon w={8}><path d="M1 0V8" stroke="#888" /><path d="M7 0V8L2 4Z" fill="#888" /></Icon>
      </Cell>
      <Cell type="button" $w={15} aria-label="Vorherige Seite"><Tri dir="left" color="#888" /></Cell>
      <Cell type="button" $w={103} $pad={14} $spread>
        I-Inhaltsseite <Tri dir="down" />
      </Cell>
      <Cell type="button" $w={13} aria-label="Nächste Seite"><Tri dir="right" color="#888" /></Cell>
      <Cell type="button" $w={14} aria-label="Letzte Seite">
        <Icon w={8}><path d="M7 0V8" stroke="#888" /><path d="M1 0V8L6 4Z" fill="#888" /></Icon>
      </Cell>
      <Cell type="button" $w={25} aria-label="Preflight-Profil">
        <Icon w={15} h={13}><circle cx="6.500" cy="6.500" r="6.500" fill="#ccc" /><path d="M4 3H7L9.500 5.500V10H4Z" fill="#ccc" stroke="#222" /><path d="M7 3V6H10" stroke="#222" /><path d="M12 11H16L14 13Z" fill="#ccc" /></Icon>
      </Cell>
      <Cell type="button" $w={119} $pad={7} $dim $spread>
        [Grundprofil] (Arbeits... <Tri dir="down" color="#777" />
      </Cell>
      <Cell type="button" $w={96} $pad={4} $spread>
        <PreflightState><Icon w={10}><circle cx="5" cy="5" r="5" fill="#666" /></Icon>Preflight aus</PreflightState>
        <Tri dir="smallDown" />
      </Cell>
      <HScroll>
        <Tri dir="left" />
        <HThumb />
        <Tri dir="right" />
      </HScroll>
      <SplitView type="button" aria-label="Geteilte Ansicht">
        <Icon w={15} h={11}><rect x="0.500" y="0.500" width="14" height="10" fill="#333" stroke="#bbb" /><path d="M7.500 0V11" stroke="#bbb" /></Icon>
      </SplitView>
      <SizeGrip />
    </StatusBar>
  );
}

const SplitView = styled.button`
  flex: none;
  padding-left: 5px;
`;

/* ---------- icon dock ---------- */

const Dock = styled.aside`
  flex: none;
  width: 39px;
  background: #4a4a4a;
  border-right: 1px solid #2a2a2a;
`;

const DockGroup = styled.div`
  display: flex;
  flex-direction: column;
  align-items: center;
  padding: 3px 0 3px 1px;
  border-bottom: 1px solid #2a2a2a;
  box-shadow: inset 0 1px 0 #545454;
`;

const DockButton = styled.button`
  display: flex;
  align-items: center;
  justify-content: center;
  width: 28px;
  height: 26px;
  margin: 1px 0;
  border-radius: 3px;
  ${(p) => p.$pressed && "background: #333; border: 1px solid #2c2c2c;"}
`;

const DockGrip = styled(Grip)`
  margin-bottom: 2px;
`;

const styleBadge = <><rect x="0.500" y="9.500" width="5" height="5" fill="#444" stroke="#d0d0d0" /><path d="M7 10.500H8.500V16.500H3.500V16" stroke="#d0d0d0" strokeWidth="2" /></>;

const dockIcons = [
  {
    Seiten: <><path d="M1 5L4 3H8V14H1Z" fill="#cfcfcf" /><path d="M17 5L14 3H10V14H17Z" fill="#cfcfcf" /><path d="M4 3V6H1M14 3V6H17" stroke="#555" /><path d="M9 0V17" stroke="#ddd" /></>,
    Ebenen: <><path d="M9 0L17 6L9 12L1 6Z" fill="#cfcfcf" /><path d="M1 10L9 16L17 10" stroke="#cfcfcf" strokeWidth="3" /></>,
    Verknüpfungen: <><path d="M7 5.500H4Q1 5.500 1 9T4 12.500H7M11 5.500H14Q17 5.500 17 9T14 12.500H11" stroke="#c6c6c6" strokeWidth="2" /><path d="M5 9H13" stroke="#c6c6c6" strokeWidth="2" /></>,
    Farbfelder: <><rect x="1" y="3" width="16" height="11" fill="#c4c4c4" /><path d="M2 4H6V8H2Z" fill="#222" /><path d="M7 4H11V8H7Z" fill="#444" /><path d="M12 4H16V8H12Z" fill="#999" /><path d="M2 9H6V13H2ZM7 9H11V13H7ZM12 9H16V13H12Z" fill="#6a6a6a" /></>,
  },
  {
    Zeichenformate: <><text x="6" y="13" fill="#c6c6c6" fontSize="16" fontWeight="700">A</text>{styleBadge}</>,
    Absatzformate: <><path d="M12 1V13M16 1V13M8 2H17" stroke="#c6c6c6" strokeWidth="2" /><circle cx="10" cy="5" r="4" fill="#c6c6c6" />{styleBadge}</>,
  },
  {
    Tabelle: <><rect x="1.500" y="2.500" width="14" height="13" fill="#444" stroke="#c6c6c6" /><path d="M2 3.500H15M2 7.500H15M6 10H15M6 12.500H15M5.500 7V15" stroke="#c6c6c6" /></>,
    Tabellenformate: <><rect x="3.500" y="1.500" width="13" height="12" fill="#444" stroke="#c6c6c6" /><path d="M4 5.500H17M8 8.500H17M8 11.500H17" stroke="#c6c6c6" />{styleBadge}</>,
    Zellenformate: <><rect x="3.500" y="1.500" width="13" height="12" fill="#444" stroke="#c6c6c6" /><path d="M4 5.500H17" stroke="#c6c6c6" /><rect x="8" y="6" width="8" height="6" fill="#999" stroke="#e4e4e4" />{styleBadge}</>,
  },
  {
    Objektformate: <><rect x="4" y="1" width="12" height="12" fill="#777" stroke="#c6c6c6" strokeWidth="2" strokeDasharray="4 1" />{styleBadge}</>,
  },
];

function IconDock() {
  return (
    <Dock>
      <DockHead $end><DoubleArrow left /></DockHead>
      {dockIcons.map((group, i) => (
        <DockGroup key={i}>
          <DockGrip />
          {Object.entries(group).map(([name, drawing]) => (
            <DockButton key={name} type="button" aria-label={name} $pressed={name === "Seiten"}>
              <Icon w={18}>{drawing}</Icon>
            </DockButton>
          ))}
        </DockGroup>
      ))}
    </Dock>
  );
}

/* ---------- pages panel, floats above the canvas ---------- */

const Panel = styled.section`
  position: absolute;
  top: 115px;
  right: 41px;
  width: 209px;
  background: #4a4a4a;
  border: 1px solid #262626;
  font-size: 9px;
  line-height: 12px;
`;

const PanelTabs = styled.div`
  display: flex;
  align-items: stretch;
  height: 19px;
  background: #343434;
  border-bottom: 1px solid #282828;
`;

const PanelTab = styled.button`
  display: flex;
  align-items: center;
  gap: 3px;
  width: ${(p) => p.$w}px;
  padding-left: ${(p) => (p.$active ? 4 : 6)}px;
  overflow: hidden;
  white-space: nowrap;
  font-size: 10px;
  font-weight: 600;
  color: ${(p) => (p.$active ? "#dcdcdc" : "#8e8e8e")};
  background: ${(p) => (p.$active ? "#4a4a4a" : "transparent")};
  border-right: 1px solid ${(p) => (p.$active ? "#282828" : "#303030")};
`;

const PanelActions = styled.span`
  flex: 1;
  display: flex;
  align-items: center;
  justify-content: flex-end;
  gap: 6px;
  padding-right: 4px;
`;

const PanelPane = styled.div`
  display: flex;
  height: ${(p) => p.$h}px;
`;

const PaneBody = styled.div`
  flex: 1;
  padding: 3px 8px 0 2px;
`;

const PaneScroll = styled.div`
  display: flex;
  flex-direction: column;
  align-items: center;
  justify-content: space-between;
  width: 13px;
  padding: 4px 0;
  background: #3a3a3a;
`;

const PaneSplit = styled.div`
  height: 4px;
  border-top: 1px solid #2c2c2c;
  border-bottom: 1px solid #2c2c2c;
  background: #565656;
`;

const MasterRow = styled.div`
  display: flex;
  align-items: center;
  justify-content: space-between;
  height: 29px;
  padding-bottom: 6px;
`;

const MasterName = styled.span`
  margin-top: 6px;
  padding: 0 4px 0 1px;
  ${(p) =>
    p.$current &&
    css`
      background: #46536a;
      color: #fff;
      font-weight: 700;
    `}
`;

const Thumbs = styled.span`
  display: flex;
`;

const Thumb = styled.span`
  width: ${(p) => (p.$double ? 17 : 18)}px;
  height: 24px;
  background: #fff;
  border: 1px solid #6a6a6a;
`;

const PageSlot = styled.div`
  width: 26px;
  margin: 0 63px 0 auto;
  color: #c8c8c8;
`;

const PageNumber = styled.span`
  display: block;
  padding-right: 3px;
  text-align: center;
  font-size: 10px;
`;

const PanelFoot = styled.div`
  display: flex;
  align-items: center;
  height: 21px;
  padding-left: 3px;
  border-top: 1px solid #333;
  box-shadow: inset 0 1px 0 #565656;
`;

const FootIcons = styled.span`
  display: flex;
  align-items: center;
  gap: 18px;
  margin: 0 11px 0 auto;
`;

const PanelGrip = styled.div`
  display: flex;
  align-items: center;
  justify-content: center;
  height: 8px;
  border-top: 1px solid #2c2c2c;
`;

function PaneScrollbar() {
  return (
    <PaneScroll>
      <Tri dir="up" color="#888" />
      <Tri dir="down" color="#888" />
    </PaneScroll>
  );
}

function PagesPanel() {
  return (
    <Panel>
      <PanelTabs>
        <PanelTab type="button" $w={50} $active>
          <Icon w={6} h={10}><path d="M0.500 4L3 1L5.500 4ZM0.500 6L3 9L5.500 6Z" stroke="#bbb" /></Icon>
          Seiten
        </PanelTab>
        <PanelTab type="button" $w={31} aria-label="Ebenen">Eben</PanelTab>
        <PanelTab type="button" $w={31} aria-label="Verknüpfungen">Verkr</PanelTab>
        <PanelTab type="button" $w={33} aria-label="Farbfelder">Farbf</PanelTab>
        <PanelActions>
          <Icon w={10} h={8}><path d="M0 0V8L5 4ZM5 0V8L10 4Z" fill="#ccc" /></Icon>
          <VLine />
          <MenuIcon />
        </PanelActions>
      </PanelTabs>
      <PanelPane $h={126}>
        <PaneBody>
          <MasterRow>
            <MasterName>[Ohne]</MasterName>
            <Thumbs><Thumb /></Thumbs>
          </MasterRow>
          <MasterRow>
            <MasterName $current>I-Inhaltsseite</MasterName>
            <Thumbs><Thumb $double /><Thumb /></Thumbs>
          </MasterRow>
        </PaneBody>
        <PaneScrollbar />
      </PanelPane>
      <PaneSplit />
      <PanelPane $h={208}>
        <PaneBody>
          <PageSlot>
            <Icon w={26} h={46}>
              <path d="M0.500 0V46" stroke="#808080" />
              <path d="M8 0H18L13 5Z" fill="#8e8e8e" />
              <rect x="1" y="6" width="25" height="35" fill="#fff" />
              <text x="18" y="15" fill="#111" fontSize="9" fontFamily="DejaVu Serif, serif">I</text>
            </Icon>
            <PageNumber>1</PageNumber>
          </PageSlot>
        </PaneBody>
        <PaneScrollbar />
      </PanelPane>
      <PanelFoot>
        1 Musterseite
        <FootIcons>
          <Icon w={17} h={12}><path d="M0 5H8V11H0Z" fill="#c6c6c6" /><path d="M5 1H10L13 4V10H8V5H5Z" fill="#c6c6c6" stroke="#333" /><path d="M14 10H18L16 12Z" fill="#ccc" /></Icon>
          <Icon w={11}><path d="M0 0H11V11H6V5H0Z" fill="#d0d0d0" /><path d="M0 6H5V11Z" fill="#999" /></Icon>
          <Icon w={12}><path d="M1 2.500H11M4 2V0.500H8V2M2 4.500L3 11.500H9L10 4.500ZM4.500 5V11M6.500 5V11M8.500 5V11" stroke="#808080" /></Icon>
        </FootIcons>
        <SizeGrip />
      </PanelFoot>
      <PanelGrip><Grip /></PanelGrip>
    </Panel>
  );
}

/* ---------- margins and columns dialog ---------- */

const DialogFrame = styled.form`
  position: absolute;
  top: 252px;
  left: 81px;
  width: 684px;
  padding: 0 7px 6px 6px;
  border: 1px solid #1e1e1e;
  border-radius: 7px;
  background:
    radial-gradient(ellipse 110px 24px at 60px 15px, rgba(205, 205, 205, 0.9), rgba(205, 205, 205, 0) 100%),
    linear-gradient(#c8c8c8 0 20px, #e8e8e8 78px, #858585 80px, #757575) 0 0 / 6px 100% no-repeat,
    linear-gradient(90deg, #a4a4a4, #828282 120px, #6c6c6c 172px, #efefef 179px, #f6f6f6 240px, #e4e4e4 266px, #f8f8f8 290px, #e6e6e6 326px, #f6f6f6 344px, #e6e6e6 390px, #f6f6f6 404px, #e8e8e8 452px, #f4f4f4 470px, #f4f4f4);
  box-shadow: 0 2px 12px 3px rgba(0, 0, 0, 0.6), inset 0 0 0 1px rgba(255, 255, 255, 0.7);
`;

const DialogTitle = styled.h2`
  height: 28px;
  margin: 0;
  padding-top: 6px;
  color: #111;
  font-size: 11px;
  line-height: 16px;
  font-weight: 400;
`;

const DialogBody = styled.div`
  display: flex;
  justify-content: space-between;
  padding: 17px 15px 23px 16px;
  background: #4a4a4a;
  border: 1px solid #cfcfcf;
  border-top-color: #383838;
  margin: 0 -1px -1px;
`;

const DialogMain = styled.div`
  width: 527px;
`;

const Frame = styled.fieldset`
  margin: 0 0 ${(p) => (p.$last ? 13 : 8)}px;
  padding: ${(p) => (p.$last ? "4px 24px 7px 0" : "4px 24px 12px 0")};
  border: 1px solid #303030;
  legend { margin-left: 8px; padding: 0 5px; }
`;

const FieldGrid = styled.div`
  display: grid;
  grid-template-columns: 169px 32px 1fr;
  grid-auto-rows: 25px;
  align-items: center;
`;

const Field = styled.div`
  display: flex;
  align-items: center;
  justify-content: flex-end;
  grid-column: ${(p) => (p.$right ? 3 : 1)};
  label { margin-right: 7px; }
`;

const DialogInput = styled.input`
  width: 72px;
  height: 18px;
  margin-left: 1px;
  padding: 0 2px;
  border: 1px solid #303030;
  border-radius: 0;
  outline: 0;
  background: #a2a2a2;
  color: #111;
  ${(p) => p.$active && "outline: 1px solid #d08a3c;"}
`;

const LinkButton = styled.button`
  grid-column: 2;
  grid-row: 1 / span 2;
  justify-self: center;
`;

const DialogSide = styled.div`
  display: flex;
  flex-direction: column;
  width: 95px;
  label { margin-left: 1px; }
`;

const PushButton = styled.button`
  height: ${(p) => (p.$primary ? 20 : 18)}px;
  margin: ${(p) => (p.$primary ? "-1px 0 10px" : "0 1px 13px")};
  border: ${(p) => (p.$primary ? 2 : 1)}px solid #2c2c2c;
  background: linear-gradient(#606060, #4e4e4e);
  line-height: 14px;
`;

const CheckLabel = styled.label`
  display: flex;
  align-items: center;
  gap: 5px;
  color: #d6d6d6;
`;

const CheckBox = styled.input`
  appearance: none;
  flex: none;
  display: block;
  width: 12px;
  height: 12px;
  margin: 0;
  border: 1px solid #2c2c2c;
  background: #5a5a5a;
  &:checked { background: #525252; }
`;

const CheckWrap = styled.span`
  position: relative;
  svg { position: absolute; left: 2px; top: 0; pointer-events: none; }
`;

function MeasureField({ id, label, value, right, active, inputRef }) {
  return (
    <Field $right={right}>
      <label htmlFor={id}>{label}</label>
      <Spinner name={label} tall />
      <DialogInput id={id} ref={inputRef} defaultValue={value} $active={active} />
    </Field>
  );
}

function MarginsDialog() {
  const outer = useRef(null);
  const [preview, setPreview] = useState(true);

  useEffect(() => {
    outer.current.focus();
    outer.current.setSelectionRange(0, 2);
  }, []);

  return (
    <DialogFrame role="dialog" aria-labelledby="dialog-title" onSubmit={(e) => e.preventDefault()}>
      <DialogTitle id="dialog-title">Ränder und Spalten</DialogTitle>
      <DialogBody>
        <DialogMain>
          <Frame>
            <legend>Ränder</legend>
            <FieldGrid>
              <MeasureField id="top" label="Oben:" value="24 mm" />
              <LinkButton type="button" aria-label="Alle Ränder gleich"><BrokenLink /></LinkButton>
              <MeasureField id="inner" label="Innen:" value="20 mm" right />
              <MeasureField id="bottom" label="Unten:" value="22,59 mm" />
              <MeasureField id="outer" label="Außen:" value="40 mm" right active inputRef={outer} />
            </FieldGrid>
          </Frame>
          <Frame $last>
            <legend>Spalten</legend>
            <FieldGrid>
              <MeasureField id="count" label="Anzahl:" value="4" />
              <MeasureField id="gutter" label="Spaltenabstand:" value="4 mm" right />
            </FieldGrid>
          </Frame>
          <CheckLabel>
            <CheckBox type="checkbox" />
            Layoutanpassung aktivieren
          </CheckLabel>
        </DialogMain>
        <DialogSide>
          <PushButton $primary>OK</PushButton>
          <PushButton type="button">Abbrechen</PushButton>
          <CheckLabel>
            <CheckWrap>
              <CheckBox type="checkbox" checked={preview} onChange={() => setPreview(!preview)} />
              {preview && <Icon w={10} h={10}><path d="M1 5L4 9L9 1" stroke="#e0e0e0" strokeWidth="2" /></Icon>}
            </CheckWrap>
            Vorschau
          </CheckLabel>
        </DialogSide>
      </DialogBody>
    </DialogFrame>
  );
}

/* ---------- overlays ---------- */

const Pointer = styled.div`
  position: absolute;
  left: 512px;
  top: 333px;
  pointer-events: none;
`;

const Watermark = styled.div`
  position: absolute;
  left: 31px;
  bottom: 14px;
  display: flex;
  align-items: flex-end;
  color: rgba(200, 200, 200, 0.7);
  font-size: 12px;
  line-height: 14px;
  font-weight: 700;
  pointer-events: none;
`;

export default function App() {
  return (
    <>
      <GlobalStyle />
      <Window>
        <AppBar>
          <Logo>Id</Logo>
          <AppBadge type="button">Br</AppBadge>
          <AppBadge type="button">St</AppBadge>
          <ZoomButton type="button">59,3 % <Tri dir="down" /></ZoomButton>
          <VLine $inset={7} />
          <ViewButton type="button" aria-label="Anzeigeoptionen">
            <Icon w={19} h={15}><path d="M0 0H18V4H4V15H0Z" fill="#c4c4c4" /><rect x="5" y="5" width="12" height="9" fill="#6e6e6e" stroke="#8a8a8a" /><path d="M5.500 0V2M8.500 0V2M11.500 0V2M14.500 0V2M0 6.500H2M0 9.500H2M0 12.500H2" stroke="#444" /></Icon>
            <Tri dir="down" />
          </ViewButton>
          <ViewButton type="button" aria-label="Bildschirmmodus">
            <Icon w={18} h={15}><path d="M0.500 3V0.500H3M15 0.500H17.500V3M17.500 12V14.500H15M3 14.500H0.500V12" stroke="#ccc" /><rect x="3.500" y="3.500" width="11" height="8" fill="#aaa" stroke="#ddd" /></Icon>
            <Tri dir="down" />
          </ViewButton>
          <ViewButton type="button" aria-label="Dokumente anordnen">
            <Icon w={18} h={15}><rect x="0.500" y="0.500" width="17" height="14" fill="#333" stroke="#ccc" /><path d="M2 2H9V13H2ZM10 2H16V7H10ZM10 8H16V13H10Z" fill="#bbb" /></Icon>
            <Tri dir="down" />
          </ViewButton>
          <AppBarRight>
            <VLine $inset={7} />
            <TemplateButton type="button">Template <Tri dir="smallDown" /></TemplateButton>
            <VLine $inset={7} />
            <SearchBox>
              <Icon w={13} h={13}><circle cx="8" cy="5" r="4" stroke="#333" /><path d="M5 8L1 12" stroke="#333" strokeWidth="2" /></Icon>
              <input type="search" aria-label="Suche" />
            </SearchBox>
            <WindowButtons>
              <WindowButton type="button" aria-label="Minimieren"><Icon w={10} h={10}><path d="M0 6H10V9H0Z" fill="#e8e8e8" /></Icon></WindowButton>
              <WindowButton type="button" aria-label="Maximieren"><Icon w={10} h={8}><rect x="1" y="1" width="8" height="6" stroke="#e8e8e8" strokeWidth="2" /></Icon></WindowButton>
              <WindowButton type="button" $wide aria-label="Schließen"><Icon w={10} h={8}><path d="M1 0L9 8M9 0L1 8" stroke="#e8e8e8" strokeWidth="2" /></Icon></WindowButton>
            </WindowButtons>
          </AppBarRight>
        </AppBar>
        <MenuBar>
          {["Datei", "Bearbeiten", "Layout", "Schrift", "Objekt", "Tabelle", "Ansicht", "Fenster", "Hilfe"].map((item) => (
            <a key={item} href="#menu">{item}</a>
          ))}
        </MenuBar>
        <Controls />
        <Workspace>
          <Tools />
          <Document>
            <TabBar>
              <DocTab>
                *Unbenannt-2 @ 59 %
                <IconButton type="button" aria-label="Dokument schließen">
                  <Icon w={6}><path d="M0 0L6 6M6 0L0 6" stroke="#bbb" /></Icon>
                </IconButton>
              </DocTab>
            </TabBar>
            <CanvasGrid>
              <Corner>
                <Icon w={15} h={16}><path d="M0 5.500H15M4.500 0V16" stroke="#888" strokeDasharray="1 1" /></Icon>
              </Corner>
              <HorizontalRuler />
              <VerticalRuler />
              <Canvas><Spread /></Canvas>
              <VScroll>
                <VThumb />
                <Tri dir="down" />
              </VScroll>
            </CanvasGrid>
            <Status />
          </Document>
          <IconDock />
        </Workspace>
        <PagesPanel />
        <MarginsDialog />
        <Pointer>
          <Icon w={9} h={16}><path d="M1 1.500H3L4.500 3L6 1.500H8M4.500 3V13M1 14.500H3L4.500 13L6 14.500H8M2 9.500H7" stroke="#111" /></Icon>
        </Pointer>
        <Watermark>
          <Icon w={33} h={36}>
            <path d="M19 30Q2 22 1 4Q1 0 5 2Q17 8 19 28" stroke="#a8a8a8" strokeWidth="2" />
            <path d="M19 28Q20 12 35 7Q38 7 35 12Q28 24 19 28" stroke="#b8b8b8" strokeWidth="2" />
            <path d="M18 27Q5 21 3 30Q4 35 15 33M21 24Q25 32 21 34Q16 34 18 24" stroke="#a0a0a0" strokeWidth="2" />
          </Icon>
          PSD-Tutorials.de
        </Watermark>
      </Window>
    </>
  );
}
